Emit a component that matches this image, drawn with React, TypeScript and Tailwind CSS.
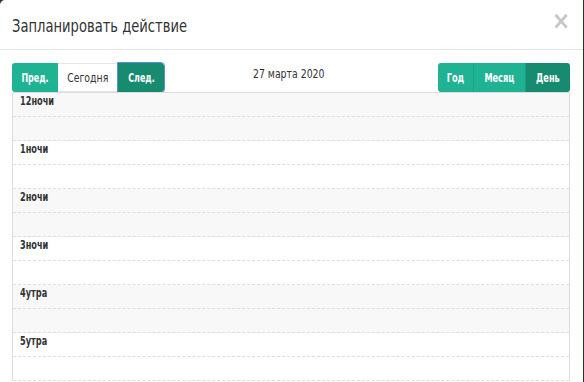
import React from "react";

const hours = [
  { label: "12ночи", shade: true },
  { label: "1ночи", shade: false },
  { label: "2ночи", shade: true },
  { label: "3ночи", shade: false },
  { label: "4утра", shade: true },
  { label: "5утра", shade: false },
];

const font = { fontFamily: '"DejaVu Sans Condensed", "Liberation Sans Narrow", "Liberation Sans", sans-serif' };

const App = () => {
  return (
    <div className="w-[584px] h-[382px] overflow-hidden bg-[#24322c] flex" style={font}>
      <div className="w-[583px] h-full bg-white rounded-tl-[5px] flex flex-col">
        <div className="h-[50px] flex items-center justify-between pl-[12px] pr-[13px] border-b border-[#e5e5e5] shrink-0">
          <h4 className="text-[18px] text-[#333] pt-[1px] inline-block origin-left scale-x-[0.81] whitespace-nowrap">
            Запланировать действие
          </h4>
          <span className="text-[24px] font-bold text-[#c6c6c6] leading-none -mt-[8px]">×</span>
        </div>
        <div className="pl-[12px] pr-[12px] pt-[13px] flex flex-col">
          <div className="flex items-start h-[29px]">
            <div className="flex h-[29px] text-[13px]">
              <button className="w-[46px] bg-[#1fb393] text-white font-bold rounded-l-[3px]">
                <span className="inline-block scale-x-[0.68]">Пред.</span>
              </button>
              <button className="w-[60px] bg-white text-[#333] border-t border-b border-[#e7e7e7]">
                <span className="inline-block scale-x-[0.8]">Сегодня</span>
              </button>
              <button className="w-[46px] bg-[#178b70] text-white font-bold rounded-r-[3px] outline outline-1 outline-[#5b8fd6]">
                <span className="inline-block scale-x-[0.68]">След.</span>
              </button>
            </div>
            <div className="flex-1 text-center pr-[24px] pt-[1px] text-[13px] text-[#333]">
              <span className="inline-block scale-x-[0.8] whitespace-nowrap">27 марта 2020</span>
            </div>
            <div className="flex h-[29px] text-[13px] mr-[1px]">
              <button className="w-[36px] bg-[#1fb393] text-white font-bold rounded-l-[3px] border-r border-[#18a384]">
                <span className="inline-block scale-x-[0.7]">Год</span>
              </button>
              <button className="w-[52px] bg-[#1fb393] text-white font-bold border-r border-[#18a384]">
                <span className="inline-block scale-x-[0.7]">Месяц</span>
              </button>
              <button className="w-[44px] bg-[#178b70] text-white font-bold rounded-r-[3px]">
                <span className="inline-block scale-x-[0.7]">День</span>
              </button>
            </div>
          </div>
          <div className="mr-[1px] border-l border-r border-t border-[#dddddd]">
            {hours.map((h) => (
              <div key={h.label} className={h.shade ? "bg-[#f8f8f8]" : "bg-white"}>
                <div className="h-[24px] border-b border-dashed border-[#dddddd] pl-[7px] text-[13px] font-bold text-[#333] leading-[16px]">
                  <span className="inline-block origin-left scale-x-[0.7]">{h.label}</span>
                </div>
                <div className="h-[24px] border-b border-dashed border-[#dddddd]" />
              </div>
            ))}
          </div>
        </div>
      </div>
    </div>
  );
};

export default App;
